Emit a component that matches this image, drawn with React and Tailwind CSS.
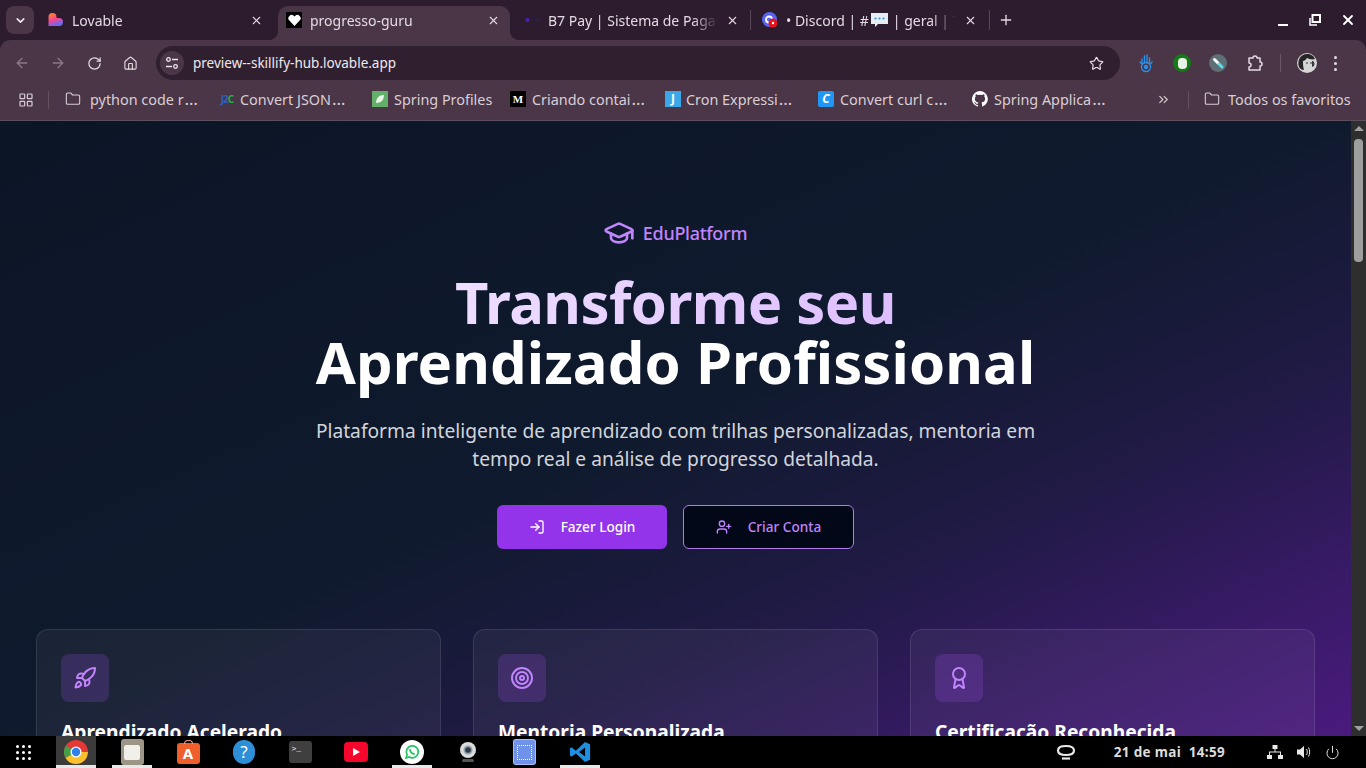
import React from "react";
import { GraduationCap, LogIn, UserPlus, Rocket, Target, Award, X, Plus, ChevronDown, ArrowLeft, ArrowRight, RotateCw, Home, Star, Folder, ChevronsRight, LayoutGrid, Power } from "lucide-react";

const UI = "font-['Noto_Sans','Open_Sans',sans-serif]";

function LovableIcon() {
  return (
    <svg width="16" height="16" viewBox="0 0 16 16">
      <defs>
        <linearGradient id="lv" x1="0.15" y1="0" x2="0.5" y2="1">
          <stop offset="0" stopColor="#ff8a25" />
          <stop offset="0.5" stopColor="#f6468f" />
          <stop offset="1" stopColor="#5f6cf7" />
        </linearGradient>
      </defs>
      <path d="M4.500 1a4 4 0 0 1 4 4v1h2.500a4 4 0 0 1 0 8H.5V5a4 4 0 0 1 4-4z" fill="url(#lv)" />
    </svg>
  );
}

function HeartIcon() {
  return (
    <span className="w-4 h-4 bg-black flex items-center justify-center rounded-[1px]">
      <svg width="13" height="13" viewBox="0 0 24 24" fill="#fff"><path d="M12 22 2.500 12A6 6 0 0 1 11 3.500l1 1 1-1A6 6 0 0 1 21.500 12z" /></svg>
    </span>
  );
}

function PayIcon() {
  return (
    <svg width="16" height="16" viewBox="0 0 16 16">
      <circle cx="3.500" cy="8" r="2.200" fill="#4a1fa8" />
      <rect x="7" y="6.500" width="2.500" height="3" fill="#2b2040" />
      <rect x="10.500" y="6.500" width="4" height="3" fill="#2b2040" />
    </svg>
  );
}

function DiscordIcon() {
  return (
    <svg width="16" height="16" viewBox="0 0 16 16">
      <circle cx="7.500" cy="7.500" r="7.500" fill="#5865f2" />
      <circle cx="7" cy="7.500" r="3" fill="none" stroke="#fff" strokeWidth="1.800" />
      <circle cx="11" cy="11" r="4.500" fill="#e8131a" />
      <circle cx="11" cy="11" r="1.200" fill="#fff" />
    </svg>
  );
}

function ChatEmoji() {
  return (
    <svg width="19" height="16" viewBox="0 0 19 16" className="ml-[1px] mr-[4px] shrink-0">
      <path d="M1 1h17v11H8l-3 3v-3H1z" fill="#e6eef5" />
      <circle cx="5.500" cy="6.500" r="1.100" fill="#3d8fe0" />
      <circle cx="9.500" cy="6.500" r="1.100" fill="#3d8fe0" />
      <circle cx="13.500" cy="6.500" r="1.100" fill="#3d8fe0" />
    </svg>
  );
}

function Tab({ icon, title, active, width, sep, ml, mr }) {
  return (
    <div className={`relative flex items-center h-full shrink-0 pb-[6px] ${active ? "bg-[#4a3646] rounded-t-[10px]" : ""}`} style={{ width }}>
      {active && <span className="absolute -left-[8px] bottom-0 w-[8px] h-[8px] bg-[radial-gradient(circle_at_0_0,transparent_7.5px,#4a3646_8px)]" />}
      {active && <span className="absolute -right-[8px] bottom-0 w-[8px] h-[8px] bg-[radial-gradient(circle_at_100%_0,transparent_7.5px,#4a3646_8px)]" />}
      <span className="w-4 h-4 flex items-center justify-center shrink-0" style={{ marginLeft: ml }}>{icon}</span>
      <span className="ml-[8px] flex-1 flex items-center min-w-0 overflow-hidden whitespace-nowrap text-[14px] text-[#e4dae3] [mask-image:linear-gradient(to_right,black_85%,transparent)]">{title}</span>
      <X size={13} strokeWidth={2} className="ml-[8px] shrink-0 text-[#e4dae3]" style={{ marginRight: mr }} />
      {sep && <span className="absolute right-0 top-[4px] h-[20px] w-px bg-[#5a4757]" />}
    </div>
  );
}

function TabStrip() {
  return (
    <div className="h-[40px] bg-[#2d1b2e] flex items-center shrink-0">
      <div className="ml-[6px] mr-[6px] w-[28px] h-[28px] rounded-lg bg-[#4a3646] flex items-center justify-center">
        <ChevronDown size={13} strokeWidth={3} className="text-[#eee6ee]" />
      </div>
      <div className="flex items-end h-[34px] self-end">
        <Tab icon={<LovableIcon />} title="Lovable" width={238} ml={8} mr={15} />
        <Tab icon={<HeartIcon />} title="progresso-guru" active width={232} ml={8} mr={10} />
        <Tab icon={<PayIcon />} title="B7 Pay | Sistema de Pagamentos" width={241} sep ml={14} mr={12} />
        <Tab icon={<DiscordIcon />} title={<>• Discord | #<ChatEmoji />| geral | TI</>} width={239} sep ml={11} mr={13} />
      </div>
      <Plus size={16} strokeWidth={2} className="ml-[8px] text-[#e4dae3]" />
      <div className="ml-auto flex items-center pr-[1px]">
        <span className="w-[32px] flex justify-center"><span className="mt-[9px] block w-[10px] h-[2px] bg-white" /></span>
        <span className="w-[32px] flex justify-center">
          <svg width="12" height="12" viewBox="0 0 12 12" fill="none" stroke="#fff"><rect x="3.500" y="1" width="7.500" height="7" strokeWidth="2" /><path d="M1 4v7h7" strokeWidth="1.500" /></svg>
        </span>
        <span className="w-[34px] flex justify-center"><X size={16} strokeWidth={2.800} className="text-white" /></span>
      </div>
    </div>
  );
}

function ExtHand() {
  return (
    <svg width="18" height="20" viewBox="0 0 18 20" fill="none" stroke="#2c8fe8" strokeWidth="1.400" strokeLinecap="round">
      <path d="M5 11V6M7.500 10V3M10 10V2M12.500 11V5M5 11l-2-2M12.500 11c0 1 2-1 2.500-2" />
      <circle cx="9" cy="14" r="4.500" />
      <circle cx="9" cy="14" r="1.500" fill="#2c8fe8" />
    </svg>
  );
}

function Toolbar() {
  return (
    <div className="h-[40px] pt-[6px] bg-[#4a3646] rounded-t-[10px] flex items-center shrink-0 relative">
      <span className="w-[16px] ml-[14px] flex justify-center"><ArrowLeft size={16} className="text-[#8b7a88]" /></span>
      <span className="w-[16px] ml-[20px] flex justify-center"><ArrowRight size={16} className="text-[#8b7a88]" /></span>
      <span className="w-[16px] ml-[20px] flex justify-center"><RotateCw size={15} strokeWidth={2} className="text-[#e4dae3]" /></span>
      <span className="w-[16px] ml-[20px] flex justify-center"><Home size={15} strokeWidth={1.800} className="text-[#e4dae3]" /></span>
      <div className="ml-[18px] w-[964px] h-[34px] rounded-full bg-[#30202f] flex items-center shrink-0">
        <span className="ml-[4px] w-[24px] h-[24px] rounded-full bg-[#4a3646] flex items-center justify-center">
          <svg width="14" height="14" viewBox="0 0 14 14" fill="none" stroke="#eee6ee" strokeWidth="1.300">
            <circle cx="3.500" cy="3.500" r="1.800" />
            <path d="M7 3.500h6M1 10.500h6" />
            <circle cx="10.500" cy="10.500" r="1.800" />
          </svg>
        </span>
        <span className="ml-[9px] text-[13.5px] text-[#efe8ef]">preview--skillify-hub.lovable.app</span>
        <Star size={15} strokeWidth={1.800} className="ml-auto mr-[16px] text-[#eee6ee]" />
      </div>
      <span className="ml-[17px] w-[18px] flex justify-center"><ExtHand /></span>
      <span className="ml-[18px] w-[18px] h-[18px] rounded-full bg-[#157a15] flex items-center justify-center">
        <span className="w-[9px] h-[11px] rounded-[4px] bg-[#e8f3e8]" />
      </span>
      <span className="ml-[18px] w-[18px] h-[18px] rounded-full bg-[#5f6f76] flex items-center justify-center">
        <svg width="12" height="12" viewBox="0 0 12 12" fill="none" strokeLinecap="round">
          <path d="M2.500 2.500 6 6" stroke="#fff" strokeWidth="3" />
          <path d="M7 7l3 3" stroke="#5fdcea" strokeWidth="3" />
        </svg>
      </span>
      <svg width="18" height="18" viewBox="0 0 18 18" fill="none" stroke="#e4dae3" strokeWidth="1.500" className="ml-[19px]">
        <path d="M3 4h4a2 2 0 0 1 4 0h3v4a2 2 0 0 1 0 4v4H3v-3a2 2 0 0 0 0-4z" strokeLinejoin="round" />
      </svg>
      <span className="ml-[16px] w-px h-[18px] bg-[#6a5866]" />
      <svg width="20" height="20" viewBox="0 0 20 20" className="ml-[16px]">
        <circle cx="10" cy="10" r="10" fill="#d6d6d6" />
        <path d="M2 14C0 8 3 1 10 1c4 0 7 2 8 5-3 1-6 0-8-1-1 2-3 3-4 3 0 3 0 6 1 9-2 0-4-1-5-3z" fill="#262626" />
        <path d="M15 8c2 0 3 2 2 5l-2 1z" fill="#3a3a3a" />
        <path d="M9 10h2M13 10h2" stroke="#333" strokeWidth="1" />
      </svg>
      <span className="ml-[17px] flex flex-col gap-[3px]">
        <span className="w-[3px] h-[3px] rounded-full bg-[#e4dae3]" />
        <span className="w-[3px] h-[3px] rounded-full bg-[#e4dae3]" />
        <span className="w-[3px] h-[3px] rounded-full bg-[#e4dae3]" />
      </span>
    </div>
  );
}

function Bookmark({ icon, label, w, ml, gap = 6, more }) {
  return (
    <div className="flex items-center shrink-0" style={{ width: w, marginLeft: ml }}>
      <span className="w-4 h-4 flex items-center justify-center shrink-0">{icon}</span>
      <span className="text-[14.4px] text-[#d9ced7] whitespace-nowrap" style={{ marginLeft: gap }}>
        {label}{more && <span className="ml-[1px] text-[17px] leading-none">…</span>}
      </span>
    </div>
  );
}

function BookmarksBar() {
  const fold = <Folder size={16} strokeWidth={1.600} className="text-[#d9ced7]" />;
  return (
    <div className="h-[41px] pb-[1px] bg-[#4a3646] border-b border-[#5f4f5c] flex items-center shrink-0">
      <LayoutGrid size={16} strokeWidth={1.800} className="ml-[18px] text-[#d9ced7]" />
      <span className="ml-[14px] w-px h-[18px] bg-[#64525f]" />
      <Bookmark ml={16} w={154} gap={9} icon={fold} label="python code r" more />
      <Bookmark w={153} gap={5} icon={<span className="text-[10px] font-bold tracking-[-1px]"><span className="text-[#2f5fc0]">J2</span><span className="text-[#22b04a]">C</span></span>} label="Convert JSON" more />
      <Bookmark w={138} icon={<span className="w-4 h-4 bg-[#62b06a] flex items-center justify-center"><svg width="10" height="10" viewBox="0 0 10 10"><path d="M1 9C1 4 4 1 9 1c0 5-3 8-8 8z" fill="#e8f5e8" /></svg></span>} label="Spring Profiles" />
      <Bookmark w={155} icon={<span className="w-4 h-4 bg-black text-white text-[11px] font-bold font-['Liberation_Serif',serif] flex items-center justify-center rounded-[1px]">M</span>} label="Criando contai" more />
      <Bookmark w={153} gap={5} icon={<span className="w-4 h-4 bg-[#3aa8e8] text-white text-[12px] font-bold flex items-center justify-center">J</span>} label="Cron Expressi" more />
      <Bookmark w={154} icon={<span className="w-4 h-4 bg-[#2196f3] rounded-[2px] text-white text-[12px] italic font-bold flex items-center justify-center">C</span>} label="Convert curl c" more />
      <Bookmark w={176} icon={
        <svg width="16" height="16" viewBox="0 0 16 16" fill="#fff"><path d="M8 0a8 8 0 0 0-2.500 15.600c.4.100.5-.2.500-.4v-1.400c-2.200.5-2.700-1-2.700-1-.4-.9-.9-1.200-.9-1.200-.7-.5.100-.5.100-.5.800.1 1.200.8 1.200.8.700 1.200 1.900.9 2.300.7.100-.5.300-.9.500-1.100-1.800-.2-3.600-.9-3.600-4 0-.9.300-1.600.8-2.100-.1-.2-.4-1 .1-2.100 0 0 .7-.2 2.200.8a7.600 7.600 0 0 1 4 0c1.500-1 2.200-.8 2.200-.8.400 1.100.2 1.900.1 2.100.5.600.8 1.300.8 2.100 0 3.100-1.900 3.700-3.700 3.900.3.300.6.800.6 1.500v2.200c0 .2.100.5.600.4A8 8 0 0 0 8 0z" /></svg>
      } label="Spring Applica" more />
      <ChevronsRight size={15} strokeWidth={1.800} className="ml-[8px] text-[#d9ced7]" />
      <span className="ml-[17px] w-px h-[18px] bg-[#64525f]" />
      <Bookmark ml={15} w={150} gap={8} icon={fold} label="Todos os favoritos" />
    </div>
  );
}

function FeatureCard({ icon: Icon, title }) {
  return (
    <div className="flex-1 rounded-xl border border-white/10 bg-white/5 p-6 h-[260px]">
      <div className="w-12 h-12 rounded-lg bg-[#a855f7]/20 flex items-center justify-center">
        <Icon size={24} strokeWidth={2} className="text-[#c084fc]" />
      </div>
      <h3 className="mt-[16px] text-[19.2px] leading-7 font-bold text-white whitespace-nowrap">{title}</h3>
    </div>
  );
}

function Page() {
  return (
    <main className="flex-1 min-w-0 overflow-hidden bg-[linear-gradient(to_bottom_right,#0b1526_0%,#101a2e_50%,#211a46_70%,#351a62_84%,#4a1a7e_100%)] font-['Noto_Sans',sans-serif]">
      <div className="flex flex-col items-center pt-[97px]">
        <div className="flex items-center gap-[8px] h-[30px] -ml-[1px]">
          <GraduationCap size={32} strokeWidth={2} className="text-[#c084fc]" />
          <span className="text-[18px] font-medium text-[#c084fc] tracking-[-0.3px]">EduPlatform</span>
        </div>
        <h1 className="mt-[24px] text-center text-[58px] leading-[60px] font-bold whitespace-nowrap">
          <span className="block tracking-[-0.6px] bg-clip-text text-transparent bg-gradient-to-r from-[#f3e8ff] to-[#d8b4fe]">Transforme seu</span>
          <span className="block text-white tracking-[0.08px]">Aprendizado Profissional</span>
        </h1>
        <p className="mt-[25px] w-[768px] text-center text-[19.2px] leading-[28px] text-[#d1d5db]">
          Plataforma inteligente de aprendizado com trilhas personalizadas, mentoria em tempo real e análise de progresso detalhada.
        </p>
        <div className="mt-[32px] flex gap-4">
          <button className="w-[170px] h-[44px] rounded-md bg-[#9333ea] text-white text-[13.6px] font-medium flex items-center justify-center gap-[16px]">
            <LogIn size={16} />Fazer Login
          </button>
          <button className="w-[171px] h-[44px] rounded-md border border-[#b27be8] bg-[#020817] text-[#c084fc] text-[13.6px] font-medium flex items-center justify-center gap-[16px]">
            <UserPlus size={16} />Criar Conta
          </button>
        </div>
        <div className="mt-[80px] w-full px-[36px] flex gap-8">
          <FeatureCard icon={Rocket} title="Aprendizado Acelerado" />
          <FeatureCard icon={Target} title="Mentoria Personalizada" />
          <FeatureCard icon={Award} title="Certificação Reconhecida" />
        </div>
      </div>
    </main>
  );
}

function Scrollbar() {
  return (
    <div className="w-[15px] shrink-0 bg-[#2e2e2e] flex flex-col items-center">
      <span className="mt-[5px] w-0 h-0 border-x-[5px] border-x-transparent border-b-[5px] border-b-[#a0a0a0]" />
      <span className="mt-[8px] w-[9px] h-[123px] rounded-[4px] bg-[#9e9e9e]" />
      <span className="mt-auto mb-[5px] w-0 h-0 border-x-[5px] border-x-transparent border-t-[5px] border-t-[#a0a0a0]" />
    </div>
  );
}

function Dock({ active, under, children }) {
  return (
    <span className={`relative w-[40px] mx-[8px] h-full flex items-center justify-center ${active ? "bg-[#3b3b3b]" : ""}`}>
      {children}
      {under && <span className="absolute left-0 right-0 bottom-0 h-[3px] bg-[#e8e8e8]" />}
    </span>
  );
}

function Taskbar() {
  return (
    <div className="h-[32px] bg-black flex items-stretch shrink-0 relative">
      <span className="ml-[16px] w-[16px] flex items-center">
        <span className="grid grid-cols-3 gap-[3px]">
          {Array.from({ length: 9 }).map((_, i) => <span key={i} className="w-[3px] h-[3px] rounded-full bg-white" />)}
        </span>
      </span>
      <span className="ml-[16px]" />
      <Dock active under>
        <svg width="24" height="24" viewBox="0 0 24 24">
          <circle cx="12" cy="12" r="12" fill="#e53935" />
          <path d="M12 12 1.600 18A12 12 0 0 1 2 5.500z" fill="#43a047" />
          <path d="M12 12h11.900A12 12 0 0 1 12 24a12 12 0 0 1-10.400-6z" fill="#fbc02d" />
          <circle cx="12" cy="12" r="5.500" fill="#fff" />
          <circle cx="12" cy="12" r="4.200" fill="#2f80ed" />
        </svg>
      </Dock>
      <Dock under>
        <span className="w-[23px] h-[26px] rounded-[3px] bg-[#9d9585] flex items-center justify-center">
          <span className="w-[16px] h-[15px] rounded-[2px] bg-[#f1efe9]" />
        </span>
      </Dock>
      <Dock>
        <span className="relative mt-[2px] w-[23px] h-[21px] rounded-[3px] bg-[#ee5f2b] text-white text-[15px] font-bold flex items-center justify-center">
          A
          <span className="absolute -top-[3px] left-[7px] w-[9px] h-[4px] rounded-t-full border border-b-0 border-[#f0a080]" />
        </span>
      </Dock>
      <Dock>
        <span className="w-[22px] h-[24px] rounded-full bg-[#2d8fd8] text-white text-[17px] flex items-center justify-center">?</span>
      </Dock>
      <Dock>
        <span className="w-[23px] h-[22px] rounded-[3px] bg-[#3f3f3f] text-white text-[8px] leading-none pl-[3px] pt-[4px] font-['Liberation_Mono',monospace]">&gt;_</span>
      </Dock>
      <Dock>
        <span className="w-[24px] h-[20px] rounded-[4px] bg-[#f5072b] flex items-center justify-center">
          <span className="w-0 h-0 border-y-[4px] border-y-transparent border-l-[7px] border-l-white" />
        </span>
      </Dock>
      <Dock under>
        <span className="w-[24px] h-[24px] rounded-full bg-white flex items-center justify-center">
          <svg width="16" height="16" viewBox="0 0 24 24" fill="none" stroke="#25c463" strokeWidth="2.600"><path d="M3 21l1.600-5A9 9 0 1 1 8 19.500z" /><path d="M9 8c0 4 3 7 7 7" strokeWidth="3" /></svg>
        </span>
      </Dock>
      <Dock>
        <svg width="18" height="24" viewBox="0 0 18 24">
          <circle cx="9" cy="10" r="8" fill="#dcdcdc" />
          <circle cx="9" cy="10" r="4.500" fill="#8fa0ad" />
          <circle cx="9" cy="10" r="2.800" fill="#2d3a46" />
          <rect x="3" y="19" width="12" height="3" rx="1.500" fill="#555" />
        </svg>
      </Dock>
      <Dock>
        <span className="w-[23px] h-[26px] rounded-[3px] bg-[#6f93ea] border border-white/40 flex items-center justify-center relative">
          <span className="w-[15px] h-[15px] border border-dotted border-white" />
        </span>
      </Dock>
      <Dock under>
        <svg width="22" height="22" viewBox="0 0 24 24"><path d="M17.500 1 23 3.500v17L17.500 23 7.500 13.500 3 17l-2-1V8l2-1 4.500 3.500zM17.500 7 11 12l6.500 5z" fill="#1e8fe0" /></svg>
      </Dock>
      <div className={`absolute inset-y-0 right-0 flex items-center text-white ${UI}`}>
        <svg width="20" height="16" viewBox="0 0 20 16" fill="none" stroke="#e8e8e8" strokeWidth="2.200" className="mr-[38px]"><path d="M10 2C5 2 2 3 2 6.500S5 11 10 11s8-1 8-4.500S15 2 10 2z" /><path d="M6 14.500h8" /></svg>
        <span className="text-[13.5px] font-bold text-[#dcdcdc] whitespace-pre tracking-[0.32px]">21 de mai  14:59</span>
        <svg width="16" height="14" viewBox="0 0 16 14" fill="#e8e8e8" className="ml-[42px]">
          <rect x="5.500" y="0" width="5" height="4" />
          <rect x="0" y="10" width="5" height="4" />
          <rect x="11" y="10" width="5" height="4" />
          <path d="M7.500 4h1v2.500H14V10h-1V7.500H3V10H2V6.500h5.500z" />
        </svg>
        <svg width="16" height="16" viewBox="0 0 16 16" fill="#e8e8e8" className="ml-[13px]">
          <path d="M1 5.500h3L8 2v12l-4-3.500H1z" />
          <path d="M10.500 5c1 1.800 1 4.200 0 6M12.500 3.500c1.600 2.800 1.600 6.200 0 9" fill="none" stroke="#e8e8e8" strokeWidth="1" />
        </svg>
        <Power size={15} strokeWidth={1.500} className="ml-[13px] mr-[26px] text-[#e8e8e8]" />
      </div>
    </div>
  );
}

export default function App() {
  return (
    <div className={`h-screen w-full flex flex-col overflow-hidden ${UI}`}>
      <div className="bg-[#2d1b2e] shrink-0">
        <TabStrip />
        <Toolbar />
        <BookmarksBar />
      </div>
      <div className="flex-1 min-h-0 flex">
        <Page />
        <Scrollbar />
      </div>
      <Taskbar />
    </div>
  );
}
